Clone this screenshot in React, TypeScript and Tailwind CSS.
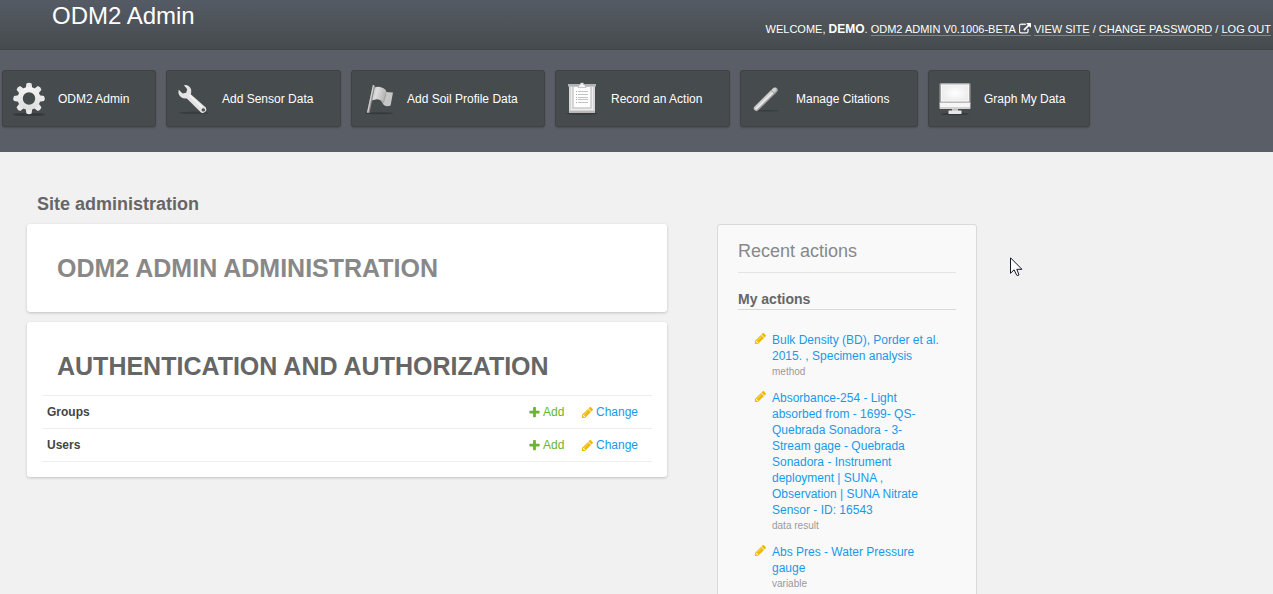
import type { ReactNode } from "react";

const iconBox = "h-9 w-9 shrink-0";

function GearIcon() {
  return (
    <svg viewBox="0 0 36 36" className={iconBox} aria-hidden="true">
      <defs>
        <linearGradient id="gear" x1="0" y1="0" x2="0" y2="1">
          <stop offset="0" stopColor="#f4f4f4" />
          <stop offset="1" stopColor="#dcdcdc" />
        </linearGradient>
      </defs>
      <ellipse cx="18" cy="33.5" rx="16" ry="1.6" fill="#34383a" />
      <g fill="url(#gear)">
        {[0, 45, 90, 135].map((angle) => (
          <path key={angle} transform={`rotate(${angle} 18 17.5)`} d="M15.4 2.5Q18 0.9 20.6 2.5L21.4 8.5H14.6ZM15.4 32.5Q18 34.1 20.6 32.5L21.4 26.5H14.6Z" fill="#e9e9e9" />
        ))}
        <path fillRule="evenodd" d="M18 6.1a11.4 11.4 0 1 0 0 22.8a11.4 11.4 0 1 0 0-22.8ZM18 11.3a6.2 6.2 0 1 1 0 12.4a6.2 6.2 0 1 1 0-12.4Z" />
      </g>
    </svg>
  );
}

function WrenchIcon() {
  return (
    <svg viewBox="0 0 36 36" className={iconBox} aria-hidden="true">
      <ellipse cx="19" cy="31.8" rx="15" ry="1.2" fill="#383d3f" />
      <path
        fillRule="evenodd"
        fill="#e3e3e3"
        d="M9 4.2C12 3.2 15.6 5.6 16.2 9C16.4 10.6 16.2 12 15.8 13.2L30.8 26.6A3.5 3.5 0 0 1 26 31.4L11.8 17.4C8.6 18 5.4 16.6 4 13.8C3.4 12.4 3.2 10.6 3.8 8.8L7.6 12.4L11.2 11.8L12.2 8.2ZM28.3 27.2a1.7 1.7 0 1 0 0 3.4a1.7 1.7 0 1 0 0-3.4Z"
      />
      <path d="M14.4 14.2L27 26.2" stroke="#f6f6f6" strokeWidth="1.4" />
    </svg>
  );
}

function FlagIcon() {
  return (
    <svg viewBox="0 0 36 36" className={iconBox} aria-hidden="true">
      <defs>
        <linearGradient id="flag" x1="0" y1="0" x2="1" y2="0.3">
          <stop offset="0" stopColor="#b5b5b5" />
          <stop offset="0.4" stopColor="#dedede" />
          <stop offset="1" stopColor="#b4b4b4" />
        </linearGradient>
      </defs>
      <ellipse cx="19" cy="32.3" rx="14" ry="1" fill="#363a3c" />
      <path d="M21 19Q23 9.5 25.5 11Q29 11.4 33 11.4L30.6 24.6Q25 26.6 22.4 22Z" fill="#c6c6c6" />
      <path d="M14.4 6.6Q19 4.4 23.5 7.2Q26.8 9 26.4 12L23.4 21.8Q19.8 17.4 15.4 18.4L11.6 19.6Z" fill="url(#flag)" />
      <path d="M21 19.6L23.4 21.8L26 12.6" stroke="#9b9b9b" strokeWidth="0.8" fill="none" />
      <path d="M14 4.4L8.2 31.8" stroke="#8f8f8f" strokeWidth="2.6" />
      <path d="M13.5 4.2L7.7 31.6" stroke="#d2d2d2" strokeWidth="1.2" />
    </svg>
  );
}

function ClipboardIcon() {
  return (
    <svg viewBox="0 0 36 36" className={iconBox} aria-hidden="true">
      <ellipse cx="18" cy="32.6" rx="16" ry="1.2" fill="#363a3c" />
      <path d="M5 4H31V32H5Z" fill="#d6d6d6" />
      <path d="M5 30H31V32H5Z" fill="#b9b9b9" />
      <path d="M7 6H29V29H7Z" fill="#ededed" />
      <path d="M4 3H32V5.5H4Z" fill="#b4b4b4" />
      <path d="M8.5 6H27.5V27.5H8.5Z" fill="#b4b4b4" />
      <path d="M9.5 6H26.5V26.5H9.5Z" fill="#fdfdfd" />
      <path d="M14 6.5Q14.5 3.5 16.5 3.5V2H19.5V3.5Q21.5 3.5 22 6.5Z" fill="#f5f5f5" stroke="#a8a8a8" strokeWidth="0.6" />
      <path d="M14 10.5H24M14 13.5H24M14 16.5H24M14 18.5H24M14 21.5H24" stroke="#c4c4c4" />
      <path d="M12 10.5H13M12 13.5H13M12 16.5H13M12 18.5H13M12 21.5H13" stroke="#a8a8a8" />
    </svg>
  );
}

function PenIcon() {
  return (
    <svg viewBox="0 0 36 36" className={iconBox} aria-hidden="true">
      <ellipse cx="17" cy="29.8" rx="13" ry="0.8" fill="#383c3e" />
      <path d="M7.4 27.4L26 9" stroke="#a5a5a5" strokeWidth="5.4" strokeLinecap="round" />
      <path d="M6.9 27L25.6 8.6" stroke="#cfcfcf" strokeWidth="3.6" strokeLinecap="round" />
      <path d="M7 28L24 11.4" stroke="#efefef" strokeWidth="1.4" />
      <path d="M21.8 9L26 13.4" stroke="#8d8d8d" strokeWidth="0.8" />
    </svg>
  );
}

function MonitorIcon() {
  return (
    <svg viewBox="0 0 36 36" className={iconBox} aria-hidden="true">
      <defs>
        <radialGradient id="screen">
          <stop offset="0" stopColor="#ffffff" />
          <stop offset="1" stopColor="#ededed" />
        </radialGradient>
      </defs>
      <ellipse cx="18" cy="33" rx="14" ry="1.2" fill="#33373a" />
      <rect x="15" y="27" width="6" height="3.5" fill="#bdbdbd" />
      <rect x="11.5" y="29.5" width="13" height="3.5" rx="0.5" fill="#e6e6e6" />
      <rect x="2.5" y="2" width="31" height="21" rx="1.5" fill="#a2a2a2" />
      <rect x="4.4" y="3.9" width="27.2" height="16.2" fill="url(#screen)" stroke="#fff" strokeWidth="0.8" />
      <rect x="2.5" y="21.5" width="31" height="6.5" rx="0.8" fill="#d2d2d2" />
      <rect x="3.2" y="22" width="29.6" height="4" fill="#f6f6f6" />
    </svg>
  );
}

const glyphBox = "h-[13px] w-[13px] shrink-0";

function PencilGlyph() {
  return (
    <svg viewBox="0 0 1792 1792" className={`${glyphBox} text-[#efb80b]`} fill="currentColor" aria-hidden="true">
      <path d="M491 1536l91-91-235-235-91 91v107h128v128h107zm523-928q0-22-22-22-10 0-17 7l-542 542q-7 7-7 17 0 22 22 22 10 0 17-7l542-542q7-7 7-17zm-54-192l416 416-832 832h-416v-416zm683 96q0 53-37 90l-166 166-416-416 166-165q36-38 90-38 53 0 91 38l235 234q37 39 37 91z" />
    </svg>
  );
}

function PlusGlyph() {
  return (
    <svg viewBox="0 0 1792 1792" className={glyphBox} fill="currentColor" aria-hidden="true">
      <path d="M1600 736v192q0 40-28 68t-68 28h-416v416q0 40-28 68t-68 28h-192q-40 0-68-28t-28-68v-416h-416q-40 0-68-28t-28-68v-192q0-40 28-68t68-28h416v-416q0-40 28-68t68-28h192q40 0 68 28t28 68v416h416q40 0 68 28t28 68z" />
    </svg>
  );
}

function ExternalGlyph() {
  return (
    <svg viewBox="0 0 1792 1792" className="ml-[3px] inline-block h-3 w-3 align-[-2px]" fill="currentColor" stroke="currentColor" strokeWidth="60" aria-hidden="true">
      <path d="M1408 928v320q0 119-84.5 203.5t-203.5 84.5h-832q-119 0-203.5-84.5t-84.5-203.5v-832q0-119 84.5-203.5t203.5-84.5h704q14 0 23 9t9 23v64q0 14-9 23t-23 9h-704q-66 0-113 47t-47 113v832q0 66 47 113t113 47h832q66 0 113-47t47-113v-320q0-14 9-23t23-9h64q14 0 23 9t9 23zm384-864v512q0 26-19 45t-45 19-45-19l-176-176-652 652q-10 10-23 10t-23-10l-114-114q-10-10-10-23t10-23l652-652-176-176q-19-19-19-45t19-45 45-19h512q26 0 45 19t19 45z" />
    </svg>
  );
}

const navItems = [
  { label: "ODM2 Admin", Icon: GearIcon, width: "min-w-[154px]" },
  { label: "Add Sensor Data", Icon: WrenchIcon, width: "min-w-[175px]" },
  { label: "Add Soil Profile Data", Icon: FlagIcon, width: "min-w-[194px]" },
  { label: "Record an Action", Icon: ClipboardIcon, width: "min-w-[175px]" },
  { label: "Manage Citations", Icon: PenIcon, width: "min-w-[178px]" },
  { label: "Graph My Data", Icon: MonitorIcon, width: "min-w-[162px]" },
];

const recentActions = [
  { title: "Bulk Density (BD), Porder et al. 2015. , Specimen analysis", kind: "method" },
  {
    title:
      "Absorbance-254 - Light absorbed from - 1699- QS-Quebrada Sonadora - 3-Stream gage - Quebrada Sonadora - Instrument deployment | SUNA , Observation | SUNA Nitrate Sensor - ID: 16543",
    kind: "data result",
  },
  { title: "Abs Pres - Water Pressure gauge", kind: "variable" },
];

function HeaderLink({ children }: { children: ReactNode }) {
  return (
    <a href="#" className="border-b border-[#81868b]">
      {children}
    </a>
  );
}

export default function App() {
  return (
    <div className="relative h-screen overflow-hidden bg-[#f1f1f1] font-['Liberation_Sans',Arial,sans-serif] text-xs text-[#444]">
      <header className="flex h-[50px] items-start justify-between border-b border-[#404446] bg-linear-to-b from-[#555b65] to-[#464b4d] pl-[52px] pr-[2px] text-white">
        <h1 className="text-2xl leading-8">ODM2 Admin</h1>
        <div className="whitespace-nowrap pt-[22px] text-[11px] leading-[14px] uppercase">
          Welcome, <strong className="text-xs leading-[14px]">Demo</strong>.{" "}
          <HeaderLink>
            ODM2 Admin v0.1006-beta
            <ExternalGlyph />
          </HeaderLink>{" "}
          <HeaderLink>View site</HeaderLink> / <HeaderLink>Change password</HeaderLink> / <HeaderLink>Log out</HeaderLink>
        </div>
      </header>

      <nav className="flex h-[102px] items-start gap-[10px] bg-[#5a5e66] pl-[2px] pt-5">
        {navItems.map(({ label, Icon, width }) => (
          <a
            key={label}
            href="#"
            className={`${width} flex h-[57px] items-center gap-[11px] whitespace-nowrap rounded-[3px] border border-[#404244] bg-[#464b4e] px-2 text-white shadow-[0_1px_2px_rgba(0,0,0,0.2)]`}
          >
            <Icon />
            {label}
          </a>
        ))}
      </nav>

      <main className="pl-[27px] pt-10">
        <h2 className="pl-[10px] text-lg leading-6 font-bold text-[#666]">Site administration</h2>
        <div className="mt-2 flex items-start gap-[50px]">
          <div className="flex w-[640px] flex-col gap-[10px]">
            <section className="rounded-[3px] bg-white px-[15px] pt-7 pb-7 shadow-[0_1px_3px_rgba(0,0,0,0.2)]">
              <h3 className="pl-[15px] text-[25px] leading-8 font-bold text-[#888] uppercase">ODM2 Admin Administration</h3>
            </section>
            <section className="rounded-[3px] bg-white px-[15px] pt-7 pb-[15px] shadow-[0_1px_3px_rgba(0,0,0,0.2)]">
              <h3 className="pl-[15px] text-[25px] leading-8 font-bold text-[#666] uppercase">Authentication and Authorization</h3>
              <table className="mt-[13px] w-full border-t border-[#eee]">
                <tbody>
                  {["Groups", "Users"].map((name) => (
                    <tr key={name} className="h-[33px] border-b border-[#eee]">
                      <th scope="row" className="pl-[5px] text-left font-bold">
                        {name}
                      </th>
                      <td className="w-[53px]">
                        <a href="#" className="flex items-center gap-[2px] text-[#6ab42d]">
                          <PlusGlyph />
                          Add
                        </a>
                      </td>
                      <td className="w-[71px]">
                        <a href="#" className="flex items-center gap-[2px] text-[#169aea]">
                          <PencilGlyph />
                          Change
                        </a>
                      </td>
                    </tr>
                  ))}
                </tbody>
              </table>
            </section>
          </div>

          <aside className="w-[260px] rounded-[3px] border border-[#d9d9d9] bg-[#f9f9f9] px-5 pt-[14px] pb-5">
            <h2 className="border-b border-[#e4e4e4] pb-[9px] text-lg leading-6 text-[#888]">Recent actions</h2>
            <h3 className="mt-4 border-b border-[#d9d9d9] text-sm leading-5 font-bold text-[#666]">My actions</h3>
            <ul className="mt-[22px] flex flex-col gap-[10px] px-4 leading-4">
              {recentActions.map(({ title, kind }) => (
                <li key={kind} className="flex gap-[5px]">
                  <PencilGlyph />
                  <div>
                    <a href="#" className="block text-[#169aea]">
                      {title}
                    </a>
                    <span className="block text-[10px] leading-4 text-[#999]">{kind}</span>
                  </div>
                </li>
              ))}
            </ul>
          </aside>
        </div>
      </main>

      <svg viewBox="0 0 13 20" className="absolute left-[1010px] top-[257px] h-5 w-[13px]" aria-hidden="true">
        <path d="M0.5 0.8V16.3L4.1 12.8L6.7 18.2Q7.8 19 9 17.9L6.8 12.3H11.9Z" fill="#fff" stroke="#15152b" strokeWidth="1" />
      </svg>
    </div>
  );
}
